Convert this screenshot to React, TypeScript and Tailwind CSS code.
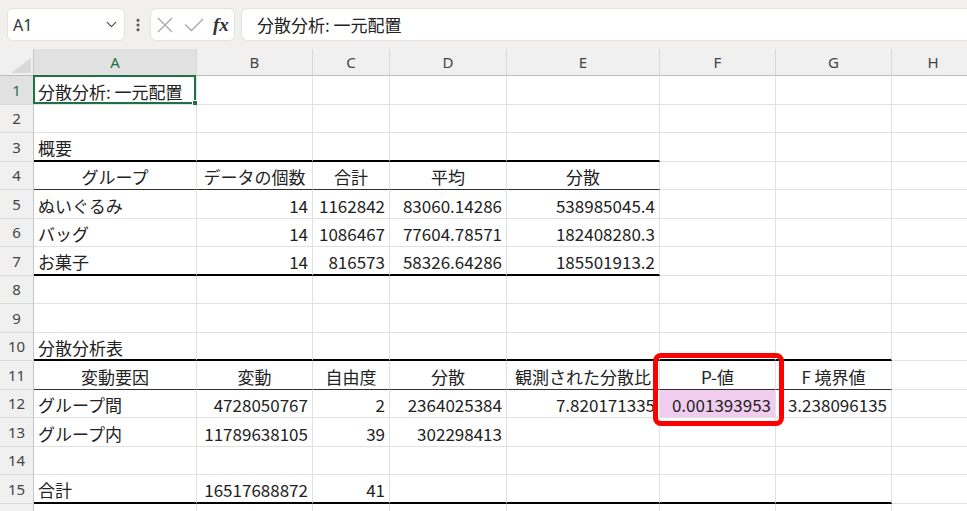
import React from "react";
import { ChevronDown, EllipsisVertical } from "lucide-react";

type Cell = { t: string; a?: "l" | "r" | "c"; pink?: boolean } | null;
type RowDef = { n: number; cells: Cell[]; bottom?: "thickE" | "thinE" | "thickG" | "thinG" };

const FONT = { fontFamily: '"Noto Sans CJK JP", "Noto Sans", sans-serif' };
const HFONT = { fontFamily: '"Noto Sans", "Noto Sans CJK JP", sans-serif' };

const GRID = "grid grid-cols-[34px_163px_116px_77px_117px_153px_116px_116px_83px]";

const L = (t: string): Cell => ({ t, a: "l" });
const R = (t: string): Cell => ({ t, a: "r" });
const Cc = (t: string): Cell => ({ t, a: "c" });

const rows: RowDef[] = [
  { n: 1, cells: [L("分散分析: 一元配置")] },
  { n: 2, cells: [] },
  { n: 3, cells: [L("概要")], bottom: "thickE" },
  { n: 4, cells: [Cc("グループ"), Cc("データの個数"), Cc("合計"), Cc("平均"), Cc("分散")], bottom: "thinE" },
  { n: 5, cells: [L("ぬいぐるみ"), R("14"), R("1162842"), R("83060.14286"), R("538985045.4")] },
  { n: 6, cells: [L("バッグ"), R("14"), R("1086467"), R("77604.78571"), R("182408280.3")] },
  { n: 7, cells: [L("お菓子"), R("14"), R("816573"), R("58326.64286"), R("185501913.2")], bottom: "thickE" },
  { n: 8, cells: [] },
  { n: 9, cells: [] },
  { n: 10, cells: [L("分散分析表")], bottom: "thickG" },
  {
    n: 11,
    cells: [Cc("変動要因"), Cc("変動"), Cc("自由度"), Cc("分散"), Cc("観測された分散比"), Cc("P-値"), Cc("F 境界値")],
    bottom: "thinG",
  },
  {
    n: 12,
    cells: [
      L("グループ間"),
      R("4728050767"),
      R("2"),
      R("2364025384"),
      R("7.820171335"),
      { t: "0.001393953", a: "r", pink: true },
      R("3.238096135"),
    ],
  },
  { n: 13, cells: [L("グループ内"), R("11789638105"), R("39"), R("302298413")] },
  { n: 14, cells: [] },
  { n: 15, cells: [L("合計"), R("16517688872"), R("41")], bottom: "thickG" },
  { n: 16, cells: [] },
];

function bottomClass(bottom: RowDef["bottom"], col: number) {
  if ((bottom === "thickE" && col < 5) || (bottom === "thickG" && col < 7)) return "border-b-2 border-b-black";
  if ((bottom === "thinE" && col < 5) || (bottom === "thinG" && col < 7)) return "border-b border-b-[#303030]";
  return "border-b border-b-[#e1e1e1]";
}

function alignClass(a?: "l" | "r" | "c") {
  if (a === "r") return "justify-end pr-[4px]";
  if (a === "c") return "justify-center";
  return "justify-start pl-[4px]";
}

function Row({ def }: { def: RowDef }) {
  const h = def.n % 2 === 1 ? "h-[29px]" : "h-[28px]";
  const selected = def.n === 1;
  return (
    <div className={GRID + " " + h}>
      <div
        className={
          "flex items-center justify-center border-r border-r-[#c6c6c6] border-b border-b-[#dadada] text-[15px] " +
          (selected ? "bg-[#e1e1e1] text-[#1e7145]" : "bg-[#f0f0f0] text-[#444]")
        }
        style={HFONT}
      >
        {def.n <= 15 ? def.n : ""}
      </div>
      {Array.from({ length: 8 }).map((_, i) => {
        const c = def.cells[i] ?? null;
        const isA1 = def.n === 1 && i === 0;
        const isF11 = def.n === 11 && i === 5;
        return (
          <div
            key={i}
            className={
              "relative flex items-center whitespace-nowrap border-r border-r-[#e1e1e1] pt-[2px] text-[17px] leading-none text-[#222] " +
              bottomClass(def.bottom, i) +
              " " +
              alignClass(c?.a) +
              (c?.pink ? " bg-[#f0cdee]" : "")
            }
            style={FONT}
          >
            {c?.t}
            {isA1 && (
              <div className="pointer-events-none absolute -left-[1px] -top-[1px] -right-[0px] -bottom-[0px] border-2 border-[#1e7145]">
                <div className="absolute -bottom-[4px] -right-[4px] h-[6px] w-[6px] border border-white bg-[#1e7145]" />
              </div>
            )}
            {isF11 && (
              <div className="pointer-events-none absolute left-[-7px] top-[-8px] z-10 h-[73px] w-[131px] rounded-[8px] border-[5px] border-[#ff0000]" />
            )}
          </div>
        );
      })}
    </div>
  );
}

export default function App() {
  const letters = ["A", "B", "C", "D", "E", "F", "G", "H"];
  return (
    <div className="h-[511px] w-full overflow-hidden bg-white">
      {/* Formula bar */}
      <div className="flex h-[49px] items-start bg-[#f1f0ee] pt-[8px] pl-[7px]">
        <div className="flex h-[33px] w-[118px] items-center justify-between rounded-[6px] border border-[#e4e2df] bg-white pl-[5px] pr-[4px]">
          <span className="text-[16px] text-[#333]" style={HFONT}>
            A1
          </span>
          <ChevronDown size={17} strokeWidth={1.6} color="#444" />
        </div>
        <div className="flex h-[33px] w-[25px] items-center justify-center">
          <EllipsisVertical size={16} strokeWidth={2.6} color="#555" />
        </div>
        <div className="flex h-[33px] w-[85px] items-center rounded-[6px] border border-[#e4e2df] bg-white pl-[6px]">
          <svg width="16" height="16" viewBox="0 0 16 16" className="mr-[11px]">
            <path d="M1 1 L15 15 M15 1 L1 15" stroke="#a9a9a9" strokeWidth="1.3" fill="none" />
          </svg>
          <svg width="20" height="14" viewBox="0 0 20 14" className="mr-[9px]">
            <polyline points="1,6.5 7.5,12.5 19,1" stroke="#a9a9a9" strokeWidth="1.3" fill="none" />
          </svg>
          <span
            className="text-[19px] font-bold italic leading-none text-[#333]"
            style={{ fontFamily: '"Liberation Serif", "DejaVu Serif", serif' }}
          >
            fx
          </span>
        </div>
        <div className="ml-[6px] flex h-[33px] flex-1 items-center rounded-l-[6px] border border-r-0 border-[#e4e2df] bg-white pl-[15px]">
          <span className="text-[17px] text-[#222]" style={FONT}>
            分散分析: 一元配置
          </span>
        </div>
      </div>

      {/* Column headers */}
      <div className={GRID + " h-[27px]"}>
        <div className="relative border-r border-r-[#c6c6c6] border-b border-b-[#bdbdbd] bg-[#f0f0f0]">
          <svg width="34" height="27" viewBox="0 0 34 27" className="absolute left-0 top-0">
            <polygon points="31,9 31,24 11,24" fill="#d9d9d9" />
          </svg>
        </div>
        {letters.map((l, i) => (
          <div
            key={l}
            className={
              "flex items-center justify-center border-r border-r-[#d9d9d9] border-b border-b-[#bdbdbd] text-[15px] " +
              (i === 0 ? "bg-[#e1e1e1] text-[#1e7145]" : "bg-[#f0f0f0] text-[#444]")
            }
            style={HFONT}
          >
            {l}
          </div>
        ))}
      </div>

      {rows.map((r) => (
        <Row key={r.n} def={r} />
      ))}
    </div>
  );
}
